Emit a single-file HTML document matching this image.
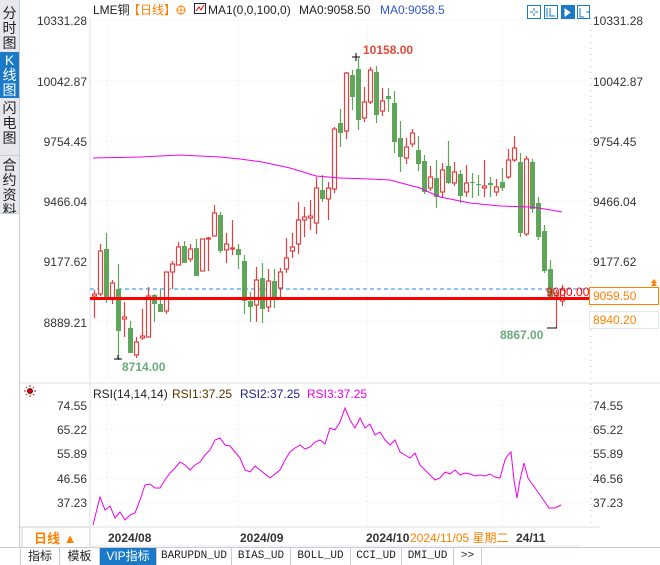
<!DOCTYPE html>
<html><head><meta charset="utf-8">
<style>
*{margin:0;padding:0;box-sizing:border-box}
body{width:660px;height:564px;overflow:hidden;background:#fff;font-family:"Liberation Sans","Noto Sans CJK SC",sans-serif;position:relative}
.side{position:absolute;left:0;top:0;width:20px;height:547px;background:#e6e8ee;border-right:1px solid #c8ccd4}
.side div{position:absolute;left:0;width:19px;font-size:14px;line-height:15px;text-align:center;color:#222}
.tabs{position:absolute;left:0;top:547px;width:660px;height:17px;background:#fff;border-top:1px solid #c8ccd4}
.tab{position:absolute;top:0;height:17px;font-size:12px;line-height:17px;text-align:center;color:#222;border-right:1px solid #ccc}
.mono{font-family:"Liberation Mono","Noto Sans CJK SC",monospace;font-size:11px}
svg{position:absolute;left:0;top:0}
</style></head><body>
<div class="side">
<div style="top:6px">分<br>时<br>图</div>
<div style="top:52px;height:46px;background:#1a7ac8;color:#fff;padding-top:1px">K<br>线<br>图</div>
<div style="top:101px">闪<br>电<br>图</div>
<div style="top:155px;border-top:1px solid #c8ccd4;padding-top:2px">合<br>约<br>资<br>料</div>
<div style="top:213px;height:334px;background:#fff;border-top:1px solid #c8ccd4"></div>
</div>
<svg width="660" height="564" id="s" xmlns="http://www.w3.org/2000/svg" font-family="Liberation Sans, Noto Sans CJK SC, sans-serif">
<g stroke="#e4e4e4" stroke-dasharray="1,3">
<line x1="90" y1="20" x2="590" y2="20"/><line x1="90" y1="81" x2="590" y2="81"/><line x1="90" y1="141" x2="590" y2="141"/><line x1="90" y1="201" x2="590" y2="201"/><line x1="90" y1="261" x2="590" y2="261"/><line x1="90" y1="322" x2="590" y2="322"/>
<line x1="107" y1="20" x2="107" y2="380"/><line x1="238" y1="20" x2="238" y2="380"/><line x1="367" y1="20" x2="367" y2="380"/><line x1="502" y1="20" x2="502" y2="380"/>
<line x1="90" y1="405" x2="590" y2="405"/><line x1="90" y1="429" x2="590" y2="429"/><line x1="90" y1="453" x2="590" y2="453"/><line x1="90" y1="478" x2="590" y2="478"/><line x1="90" y1="502" x2="590" y2="502"/>
<line x1="107" y1="400" x2="107" y2="527"/><line x1="238" y1="400" x2="238" y2="527"/><line x1="367" y1="400" x2="367" y2="527"/><line x1="502" y1="400" x2="502" y2="527"/>
</g>
<line x1="90" y1="18" x2="90" y2="527" stroke="#dde"/>
<line x1="591" y1="18" x2="591" y2="527" stroke="#bbb" stroke-dasharray="1,5"/>
<line x1="20" y1="383" x2="660" y2="383" stroke="#dde3ea"/>
<line x1="20" y1="527" x2="600" y2="527" stroke="#dde3ea"/>
<line x1="20" y1="527" x2="90" y2="527" stroke="#ccc"/>
<line x1="90" y1="289" x2="590" y2="289" stroke="#1a8cff" stroke-dasharray="4,3"/>
<g font-size="12" fill="#333" text-anchor="end">
<text x="87" y="25">10331.28</text><text x="87" y="86">10042.87</text><text x="87" y="146">9754.45</text><text x="87" y="206">9466.04</text><text x="87" y="266">9177.62</text><text x="87" y="327">8889.21</text>
<text x="87" y="410">74.55</text><text x="87" y="434">65.22</text><text x="87" y="458">55.89</text><text x="87" y="483">46.56</text><text x="87" y="507">37.23</text>
</g>
<g font-size="12" fill="#333">
<text x="593" y="25">10331.28</text><text x="593" y="86">10042.87</text><text x="593" y="146">9754.45</text><text x="593" y="206">9466.04</text><text x="593" y="266">9177.62</text>
<text x="593" y="410">74.55</text><text x="593" y="434">65.22</text><text x="593" y="458">55.89</text><text x="593" y="483">46.56</text><text x="593" y="507">37.23</text>
</g>
<g id="c"></g>
<polyline fill="none" stroke="#ee00ee" stroke-width="1" points="93,158 140,157 180,155 200,156 220,157 240,159 262,162 290,168 316,176 340,178 370,179 390,180 405,184 420,188 440,197 470,203 500,206 530,207 545,209 562,212"/>
<line x1="90" y1="298.5" x2="590" y2="298.5" stroke="#ff0000" stroke-width="3"/>
<polyline fill="none" stroke="#ee00ee" points="93,525 100,497 105,510 110,506 115,518 120,512 125,520 130,515 135,513 140,500 145,485 150,484 155,488 160,488 165,480 170,473 175,468 180,462 185,465 190,470 195,465 200,462 205,455 210,450 215,440 220,438 225,445 230,446 235,452 240,458 245,470 250,472 255,466 260,470 265,474 270,478 275,474 280,470 285,460 290,452 295,448 300,445 305,449 310,447 315,442 320,440 325,444 330,428 335,430 340,422 345,408 350,420 355,428 360,418 365,428 370,424 375,435 380,432 385,440 390,445 395,440 400,452 405,455 410,458 415,453 420,465 425,470 430,475 435,480 440,478 445,472 450,474 455,470 460,475 465,473 470,474 475,476 480,475 485,476 490,474 495,477 500,478 505,460 508,455 511,452 514,480 517,498 520,480 524,463 528,478 533,485 540,495 549,508 555,508 561,505"/>
<g font-size="12" font-weight="bold">
<text x="363" y="54" fill="#e04a3a">10158.00</text>
<text x="122" y="371" fill="#6aaa7a">8714.00</text>
<text x="500" y="339" fill="#6aaa7a">8867.00</text>
<text x="546" y="296" fill="#ff0000" font-weight="normal">9000.00</text>
</g>
<path d="M352,57h8M356,53v8M114,359h8M118,355v4M547,328h10" stroke="#000"/>
<rect x="589.5" y="287.5" width="69" height="17" fill="#fff" stroke="#ff8000"/>
<text x="593" y="300" font-size="12" fill="#ff8000">9059.50</text>
<rect x="589.5" y="311.5" width="69" height="17" fill="#fff" stroke="#e0e8ee"/>
<text x="593" y="324" font-size="12" fill="#ff8000">8940.20</text>
<path d="M651,283l3,-4l3,4zM651,286l3,-4l3,4z" fill="#ff8000"/>
<text x="93" y="14" font-size="12" fill="#222">LME铜</text>
<text x="128" y="14" font-size="12" fill="#ff8000">【日线】</text>
<circle cx="181" cy="10" r="4" fill="none" stroke="#ff8000"/><path d="M176,10h10M181,5v10" stroke="#ff8000" stroke-width=".8"/>
<rect x="194.5" y="3.5" width="11" height="10" fill="#fff" stroke="#223"/><path d="M196,11l3,-4l2,3l3,-5" stroke="#e00" fill="none"/>
<text x="208" y="14" font-size="12" fill="#222">MA1(0,0,100,0)</text>
<text x="299" y="14" font-size="12" fill="#222">MA0:9058.50</text>
<text x="380" y="14" font-size="12" fill="#3355cc">MA0:9058.5</text>
<g fill="none" stroke="#1a7ac8">
<rect x="527.5" y="5.5" width="13" height="13"/><rect x="544.5" y="5.5" width="13" height="13"/><rect x="561.5" y="5.5" width="13" height="13" fill="#1a7ac8"/><rect x="577.5" y="5.5" width="12" height="13"/>
<path d="M534,8v3M534,13v3M530,12h3M535,12h3M547,8v9M550,8v8h5M563,8v9h9M580,8v9h4M586,12h3"/>
<path d="M565,9v7l5,-3.5z" stroke="#fff" fill="#fff"/>
</g>
<circle cx="30" cy="391" r="2.5" fill="#e00" stroke="#000" stroke-width=".8"/>
<path d="M30,385v2M30,395v2M24,391h2M34,391h2M26,387l1,1M33,394l1,1M26,395l1,-1M33,388l1,-1" stroke="#e00"/>
<text x="93" y="398" font-size="12" fill="#222">RSI(14,14,14)</text>
<text x="172" y="398" font-size="12" fill="#553300">RSI1:37.25</text>
<text x="240" y="398" font-size="12" fill="#222288">RSI2:37.25</text>
<text x="307" y="398" font-size="12" fill="#ee00ee">RSI3:37.25</text>
<line x1="22" y1="528" x2="22" y2="547" stroke="#ccc"/><line x1="90" y1="528" x2="90" y2="547" stroke="#ccc"/>
<text x="34" y="543" font-size="13" font-weight="bold" fill="#ff8000">日线 ▲</text>
<g font-size="12" font-weight="bold" fill="#333">
<text x="108" y="542">2024/08</text><text x="240" y="542">2024/09</text><text x="366" y="542">2024/10</text><text x="516" y="542">24/11</text>
</g>
<rect x="409" y="529" width="107" height="16" fill="#fff"/>
<text x="410" y="542" font-size="12" fill="#ff8000">2024/11/05 星期二</text>
<line x1="90" y1="546" x2="580" y2="546" stroke="#e4e8ee"/>
</svg>
<div class="tabs">
<div class="tab" style="left:20px;width:40px;border-left:1px solid #ccc">指标</div>
<div class="tab" style="left:60px;width:40px">模板</div>
<div class="tab" style="left:100px;width:57px;background:#1a7ac8;color:#fff">VIP指标</div>
<div class="tab mono" style="left:157px;width:75px">BARUPDN_UD</div>
<div class="tab mono" style="left:232px;width:59px">BIAS_UD</div>
<div class="tab mono" style="left:291px;width:60px">BOLL_UD</div>
<div class="tab mono" style="left:351px;width:51px">CCI_UD</div>
<div class="tab mono" style="left:402px;width:52px">DMI_UD</div>
<div class="tab mono" style="left:454px;width:28px">&gt;&gt;</div>
</div>
<script>
var d=[[94,294,296,290,318,'r'],[100,251,294,244,296,'r'],[106,249,298,233,303,'g'],[112,283,299,280,304,'r'],[118,289,331,264,360,'g'],[124,317,319,302,337,'r'],[130,328,353,321,353,'g'],[136,342,355,337,358,'r'],[142,336,338,309,340,'r'],[148,296,337,287,337,'r'],[154,295,304,294,322,'g'],[160,304,312,289,312,'g'],[166,272,311,272,314,'r'],[172,264,272,261,289,'r'],[178,247,265,242,265,'r'],[184,246,263,241,263,'g'],[190,249,259,244,262,'r'],[196,248,276,239,276,'g'],[202,239,271,239,271,'r'],[208,238,239,237,271,'r'],[214,213,236,205,236,'r'],[220,215,251,212,253,'g'],[226,244,250,233,263,'r'],[232,248,249,220,255,'r'],[238,249,255,244,269,'g'],[244,261,301,255,314,'g'],[250,301,307,292,322,'g'],[256,280,305,267,322,'r'],[262,278,309,263,323,'g'],[268,281,307,269,312,'r'],[274,281,297,269,308,'g'],[280,272,288,268,297,'r'],[286,258,269,238,273,'r'],[292,247,251,233,258,'r'],[298,220,244,202,254,'r'],[304,217,220,207,237,'r'],[310,216,218,200,230,'r'],[316,188,223,177,234,'r'],[322,190,199,175,202,'g'],[328,188,199,182,220,'r'],[334,129,189,127,193,'r'],[340,123,133,109,147,'g'],[346,73,131,72,139,'r'],[352,75,97,70,110,'g'],[358,69,120,58,130,'g'],[364,102,118,87,122,'r'],[370,70,102,67,104,'r'],[376,72,115,66,123,'g'],[382,101,111,88,116,'r'],[388,96,99,88,112,'g'],[394,103,142,91,153,'g'],[400,138,157,121,172,'g'],[406,147,158,138,164,'r'],[412,133,144,129,147,'r'],[418,150,164,136,171,'g'],[424,161,192,155,194,'g'],[430,177,188,166,191,'r'],[436,178,197,160,208,'g'],[442,170,192,163,198,'r'],[448,166,183,141,184,'g'],[454,172,183,162,186,'r'],[460,174,196,170,203,'g'],[466,183,192,165,197,'r'],[472,182,183,173,198,'g'],[478,184,185,175,196,'g'],[484,186,188,160,197,'r'],[490,183,185,177,197,'g'],[496,187,192,179,196,'r'],[502,182,188,168,191,'g'],[508,160,177,149,179,'r'],[514,148,160,136,162,'r'],[520,162,233,153,237,'g'],[526,159,234,156,236,'r'],[532,162,209,159,213,'g'],[538,203,237,197,240,'g'],[544,231,271,225,273,'g'],[550,269,298,260,300,'g'],[556,293,296,290,328,'r'],[562,290,301,285,306,'r']];
var h='';d.forEach(function(c){var col=c[5]=='r'?'#e04040':'#5fa55a';
h+='<line x1="'+(c[0]+.5)+'" y1="'+c[3]+'" x2="'+(c[0]+.5)+'" y2="'+c[4]+'" stroke="'+col+'" stroke-width="1.2"/>';
if(c[5]=='r')h+='<rect x="'+(c[0]-1.5)+'" y="'+c[1]+'" width="4" height="'+Math.max(1,c[2]-c[1])+'" fill="#fff" stroke="'+col+'" stroke-width="1.2"/>';
else h+='<rect x="'+(c[0]-2)+'" y="'+c[1]+'" width="5" height="'+Math.max(1,c[2]-c[1])+'" fill="'+col+'"/>';});
document.getElementById('c').innerHTML=h;
</script>
</body></html>
